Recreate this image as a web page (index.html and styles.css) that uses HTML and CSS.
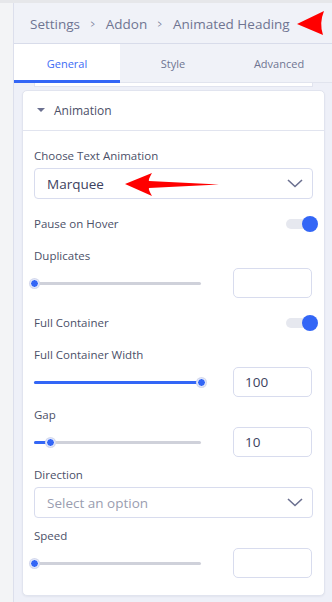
FILE: index.html
```html
<!DOCTYPE html>
<html>
<head>
<meta charset="utf-8">
<link rel="stylesheet" href="styles.css">
</head>
<body>
<div class="app">
  <div class="rail"></div>
  <div class="panel">
    <div class="crumbs">
      <span>Settings</span>
      <span class="sep">&gt;</span>
      <span>Addon</span>
      <span class="sep">&gt;</span>
      <span>Animated Heading</span>
      <svg class="red-arrow top-arrow" width="30" height="26" viewBox="0 0 30 26"><path d="M1 13 L28 0 Q23 12 27 24 Z" fill="#ff0000"/></svg>
    </div>
    <div class="tabs">
      <div class="tab active">General</div>
      <div class="tab">Style</div>
      <div class="tab">Advanced</div>
    </div>
    <div class="content">
      <div class="stub"></div>
      <div class="card">
        <div class="card-head">
          <span class="caret"></span>
          <span>Animation</span>
        </div>
        <div class="card-body">
          <div class="field">
            <div class="label">Choose Text Animation</div>
            <div class="select">
              <span class="value">Marquee</span>
              <svg class="chev" width="16" height="9" viewBox="0 0 16 9"><path d="M1 1 L8 7.5 L15 1" fill="none" stroke="#6b7090" stroke-width="1.6"/></svg>
            </div>
            <svg class="red-arrow mid-arrow" width="96" height="26" viewBox="0 0 96 26"><path d="M0 12 L27 1 Q23 8 24 9 L94 12.5 L24 16 Q23 17 27 24 Z" fill="#ff0000"/></svg>
          </div>
          <div class="toggle-row">
            <span class="label-inline">Pause on Hover</span>
            <span class="toggle"><span class="knob"></span></span>
          </div>
          <div class="field">
            <div class="label">Duplicates</div>
            <div class="slide-row">
              <div class="slider"><div class="fill" style="width:0%"></div><div class="thumb" style="left:0%"></div></div>
              <div class="num"></div>
            </div>
          </div>
          <div class="toggle-row">
            <span class="label-inline">Full Container</span>
            <span class="toggle"><span class="knob"></span></span>
          </div>
          <div class="field">
            <div class="label">Full Container Width</div>
            <div class="slide-row">
              <div class="slider"><div class="fill" style="width:100%"></div><div class="thumb" style="left:100%"></div></div>
              <div class="num">100</div>
            </div>
          </div>
          <div class="field">
            <div class="label">Gap</div>
            <div class="slide-row">
              <div class="slider"><div class="fill" style="width:10%"></div><div class="thumb" style="left:10%"></div></div>
              <div class="num">10</div>
            </div>
          </div>
          <div class="field">
            <div class="label">Direction</div>
            <div class="select">
              <span class="placeholder">Select an option</span>
              <svg class="chev" width="16" height="9" viewBox="0 0 16 9"><path d="M1 1 L8 7.5 L15 1" fill="none" stroke="#6b7090" stroke-width="1.6"/></svg>
            </div>
          </div>
          <div class="field">
            <div class="label">Speed</div>
            <div class="slide-row">
              <div class="slider"><div class="fill" style="width:0%"></div><div class="thumb" style="left:0%"></div></div>
              <div class="num"></div>
            </div>
          </div>
        </div>
      </div>
    </div>
  </div>
</div>
</body>
</html>
```
FILE: styles.css
```css
* { box-sizing: border-box; }
html, body { margin: 0; padding: 0; }
body {
  width: 332px;
  height: 602px;
  overflow: hidden;
  font-family: "Open Sans", "Noto Sans", sans-serif;
  background: #eef0f8;
}
.app {
  display: flex;
  height: 602px;
  border-top: 3px solid #e6e7ea;
}
.rail {
  width: 14px;
  flex: none;
  background: #f3f4f6;
  border-right: 1px solid #dcdfec;
}
.panel {
  flex: 1;
  display: flex;
  flex-direction: column;
  background: #eef0f8;
  min-width: 0;
}
.crumbs {
  position: relative;
  height: 41px;
  display: flex;
  align-items: center;
  padding: 2px 0 0 16px;
  background: #f0f2f8;
  border-bottom: 1px solid #d8dcea;
  color: #6f7592;
  font-size: 13.5px;
  white-space: nowrap;
}
.crumbs .sep {
  font-size: 10px;
  margin: 0 10px 0 10px;
  transform: scaleX(0.7);
}
.red-arrow { position: absolute; }
.top-arrow { left: 282px; top: 8px; }
.tabs {
  display: flex;
  height: 39px;
  background: #f0f2f8;
}
.tab {
  flex: 1;
  display: flex;
  align-items: center;
  justify-content: center;
  font-size: 11px;
  color: #6f7592;
  border-bottom: 1px solid #e1e4ee;
}
.tab.active {
  background: #fff;
  color: #3d6bf5;
  border-bottom: 3px solid #3366f6;
  padding-top: 2px;
}
.content {
  flex: 1;
  padding: 0 7px 0 8px;
}
.stub {
  height: 4px;
  margin: 0 12px 0 12px;
  background: #fff;
  border: 1px solid #e1e4ef;
  border-top: none;
}
.card {
  margin-top: 3px;
  background: #fff;
  border: 1px solid #e1e4ef;
  border-radius: 5px;
  box-shadow: 0 1px 2px rgba(40, 50, 90, 0.06);
}
.card-head {
  height: 40px;
  display: flex;
  align-items: center;
  padding-left: 14px;
  gap: 9px;
  border-bottom: 1px solid #e1e4ef;
  font-size: 12px;
  color: #4b5068;
}
.caret {
  width: 0;
  height: 0;
  border-left: 4px solid transparent;
  border-right: 4px solid transparent;
  border-top: 4px solid #6b7090;
  margin-top: -1px;
}
.card-body {
  padding: 16px 11px 17px 11px;
  display: flex;
  flex-direction: column;
  gap: 9px;
}
.field { position: relative; }
.label, .label-inline {
  font-size: 11.5px;
  line-height: 18px;
  color: #4b5068;
}
.label { margin-bottom: 3px; }
.select {
  height: 31px;
  border: 1px solid #d8dcee;
  border-radius: 4px;
  display: flex;
  align-items: center;
  justify-content: space-between;
  padding: 0 9px 0 12px;
}
.select .value { font-size: 13.5px; color: #3d4260; }
.select .placeholder { font-size: 13.5px; color: #9a9db0; }
.mid-arrow { left: 91px; top: 25px; }
.toggle-row {
  height: 30px;
  padding-top: 7px;
  display: flex;
  justify-content: space-between;
  align-items: flex-start;
  margin-right: -5px;
}
.toggle {
  position: relative;
  width: 32px;
  height: 16px;
  margin-top: 1px;
}
.toggle::before {
  content: "";
  position: absolute;
  left: 0;
  top: 3px;
  width: 24px;
  height: 10px;
  border-radius: 5px;
  background: #e6e8ef;
}
.knob {
  position: absolute;
  right: 0;
  top: 0;
  width: 16px;
  height: 16px;
  border-radius: 50%;
  background: #3366f6;
}
.slide-row {
  display: flex;
  align-items: center;
  gap: 32px;
}
.slider {
  position: relative;
  width: 167px;
  height: 3px;
  background: #cfd1da;
  border-radius: 2px;
}
.fill {
  height: 3px;
  background: #3366f6;
  border-radius: 2px;
}
.thumb {
  position: absolute;
  top: 50%;
  width: 9px;
  height: 9px;
  margin: -4.5px 0 0 -4.5px;
  border-radius: 50%;
  background: #3366f6;
  border: 1.5px solid #fff;
  box-shadow: 0 0 0 1px #d5d9ec;
}
.num {
  width: 79px;
  height: 30px;
  border: 1px solid #d8dcee;
  border-radius: 5px;
  display: flex;
  align-items: center;
  padding-left: 11px;
  font-size: 13.5px;
  color: #3d4260;
}
```
